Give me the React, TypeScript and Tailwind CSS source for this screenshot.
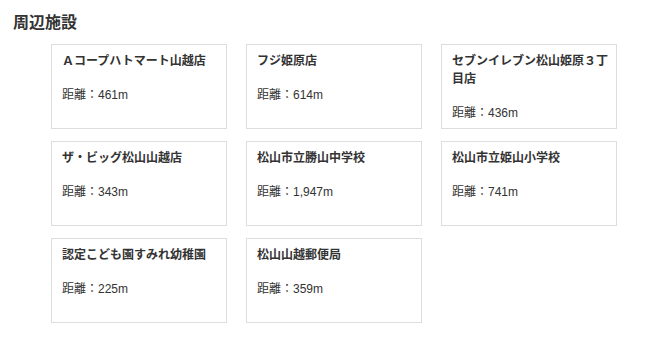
const FACILITIES = [
  { name: "Ａコープハトマート山越店", distance: "461m" },
  { name: "フジ姫原店", distance: "614m" },
  { name: "セブンイレブン松山姫原３丁目店", distance: "436m" },
  { name: "ザ・ビッグ松山山越店", distance: "343m" },
  { name: "松山市立勝山中学校", distance: "1,947m" },
  { name: "松山市立姫山小学校", distance: "741m" },
  { name: "認定こども園すみれ幼稚園", distance: "225m" },
  { name: "松山山越郵便局", distance: "359m" },
];

export default function App() {
  return (
    <div
      className="min-h-[346px] bg-white text-[#333] pl-[13px] pt-[12px]"
      style={{ fontFamily: '"Liberation Sans", "Noto Sans CJK JP", sans-serif' }}
    >
      <h2 className="text-[16px] leading-[22px] font-bold">周辺施設</h2>
      <div className="ml-[38px] mt-[10px] grid grid-cols-[176px_176px_176px] gap-x-[19px] gap-y-[12px]">
        {FACILITIES.map((f) => (
          <div
            key={f.name}
            className="h-[85px] border border-[#dddddd] pl-[10px] pr-[6px] pt-[7px]"
          >
            <div className="text-[12px] leading-[18px] font-bold">{f.name}</div>
            <div className="mt-[16px] text-[12px] leading-[18px]">
              距離：{f.distance}
            </div>
          </div>
        ))}
      </div>
    </div>
  );
}
